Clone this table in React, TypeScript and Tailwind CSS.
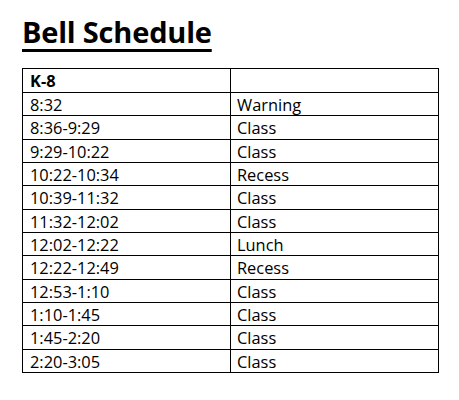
import React from "react";

const rows: { t: string; l: string; h: string; bold?: boolean }[] = [
  { t: "K-8", l: "", h: "h-[24px]", bold: true },
  { t: "8:32", l: "Warning", h: "h-[23px]" },
  { t: "8:36-9:29", l: "Class", h: "h-[24px]" },
  { t: "9:29-10:22", l: "Class", h: "h-[23px]" },
  { t: "10:22-10:34", l: "Recess", h: "h-[23px]" },
  { t: "10:39-11:32", l: "Class", h: "h-[24px]" },
  { t: "11:32-12:02", l: "Class", h: "h-[23px]" },
  { t: "12:02-12:22", l: "Lunch", h: "h-[23px]" },
  { t: "12:22-12:49", l: "Recess", h: "h-[24px]" },
  { t: "12:53-1:10", l: "Class", h: "h-[23px]" },
  { t: "1:10-1:45", l: "Class", h: "h-[23px]" },
  { t: "1:45-2:20", l: "Class", h: "h-[24px]" },
  { t: "2:20-3:05", l: "Class", h: "h-[23px]" },
];

export default function App() {
  return (
    <div
      className="w-[459px] h-[400px] bg-white text-black pl-[22px] pt-[17px]"
      style={{ fontFamily: '"Open Sans", "Noto Sans", sans-serif' }}
    >
      <h1 className="h-[29px] text-[29px] leading-[29px] font-bold underline decoration-[3px] underline-offset-[6px] tracking-[-0.2px]">
        Bell Schedule
      </h1>
      <div className="mt-[22px] w-[417px] border-b border-black">
        {rows.map((r, i) => (
          <div key={i} className={`flex ${r.h} border-t border-black`}>
            <div
              className={`w-[208px] border-l border-black pl-[7px] pt-[1px] text-[16.4px] leading-[22px] ${
                r.bold ? "font-bold" : ""
              }`}
            >
              {r.t}
            </div>
            <div className="flex-1 border-l border-r border-black pl-[6px] pt-[1px] text-[16.4px] leading-[22px]">
              {r.l}
            </div>
          </div>
        ))}
      </div>
    </div>
  );
}
